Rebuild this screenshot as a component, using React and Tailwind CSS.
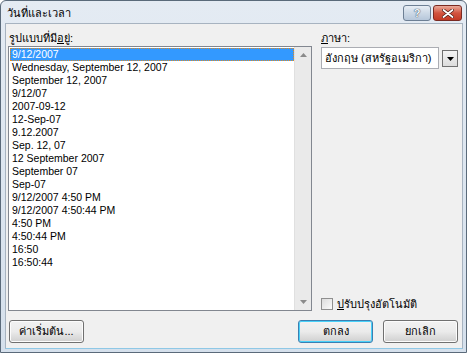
import React from "react";

const items = [
  "9/12/2007",
  "Wednesday, September 12, 2007",
  "September 12, 2007",
  "9/12/07",
  "2007-09-12",
  "12-Sep-07",
  "9.12.2007",
  "Sep. 12, 07",
  "12 September 2007",
  "September 07",
  "Sep-07",
  "9/12/2007 4:50 PM",
  "9/12/2007 4:50:44 PM",
  "4:50 PM",
  "4:50:44 PM",
  "16:50",
  "16:50:44",
];

const font = { fontFamily: '"Liberation Sans", "DejaVu Sans", "Noto Sans", sans-serif' };

function Btn({ children, focused, className = "" }) {
  return (
    <div
      className={
        "h-[23px] w-[75px] rounded-[3px] border flex items-center justify-center text-[11px] text-black bg-gradient-to-b from-[#f2f2f2] via-[#ebebeb] to-[#cfcfcf] " +
        (focused ? "border-[#3c7fb1] shadow-[inset_0_0_0_1px_#48d1f9]" : "border-[#707070] shadow-[inset_0_0_0_1px_#fcfcfc]") +
        " " +
        className
      }
    >
      {children}
    </div>
  );
}

export default function App() {
  return (
    <div className="w-[467px] h-[353px] bg-white" style={font}>
      <div className="w-[467px] h-[353px] border border-[#5a6a7a] rounded-t-[6px] bg-gradient-to-b from-[#e4ebf3] to-[#d5e0ec] flex flex-col">
        {/* title bar */}
        <div className="h-[21px] flex items-center pl-[6px] pr-[4px]">
          <div className="text-[11px] text-black flex-1 pt-[3px]">วันที่และเวลา</div>
          <div className="flex gap-[2px] pt-[3px]">
            <div className="w-[28px] h-[16px] rounded-[3px] border border-[#6d7f94] bg-gradient-to-b from-[#e8eef5] via-[#cdd9e6] to-[#b6c7da] flex items-center justify-center text-[11px] font-bold text-[#f4f7fb] [text-shadow:0_0_1px_#34495e,0_0_1px_#34495e]">
              ?
            </div>
            <div className="w-[29px] h-[16px] rounded-[3px] border border-[#7a2a22] bg-gradient-to-b from-[#e9a99b] via-[#d2543f] to-[#c33a25] flex items-center justify-center">
              <svg width="12" height="9" viewBox="0 0 12 9">
                <path d="M1.5 1 L10.5 8 M10.5 1 L1.5 8" stroke="#4a1a14" strokeWidth="3.2" strokeLinecap="round" />
                <path d="M1.5 1 L10.5 8 M10.5 1 L1.5 8" stroke="#ffffff" strokeWidth="1.8" strokeLinecap="round" />
              </svg>
            </div>
          </div>
        </div>
        {/* content */}
        <div className="flex-1 ml-[4px] mr-[3px] mb-[3px] mt-[1px] border border-[#a7b3c0] bg-[#f0f0f0] flex flex-col pl-[2px] pr-[3px] pt-[8px] border-b-[#8fc8e6]">
          <div className="flex h-[279px]">
            {/* left column */}
            <div className="w-[304px] flex flex-col">
              <div className="h-[14px] text-[11px] leading-[12px] text-black pl-[1px]">
                รูปแบบที่มี<span className="underline">อ</span>ยู่:
              </div>
              <div className="h-[265px] border border-[#828790] bg-white flex">
                <div className="flex-1 pt-[1px] pl-[1px]">
                  {items.map((t, i) =>
                    i === 0 ? (
                      <div
                        key={i}
                        className="h-[13px] leading-[11px] text-[10.5px] text-white bg-[#3399ff] border border-dotted border-[#e08a20] pl-[1px]"
                      >
                        {t}
                      </div>
                    ) : (
                      <div key={i} className="h-[13px] leading-[13px] text-[10.5px] text-black pl-[2px]">
                        {t}
                      </div>
                    )
                  )}
                </div>
                <div className="w-[17px] bg-[#eaeaea] border-l border-[#e0e0e0] flex flex-col justify-between items-center py-[6px]">
                  <svg width="7" height="4" viewBox="0 0 7 4">
                    <path d="M0 4 L3.5 0 L7 4 Z" fill="#8a8a8a" />
                  </svg>
                  <svg width="7" height="4" viewBox="0 0 7 4">
                    <path d="M0 0 L3.5 4 L7 0 Z" fill="#8a8a8a" />
                  </svg>
                </div>
              </div>
            </div>
            {/* right column */}
            <div className="flex-1 flex flex-col pl-[9px]">
              <div className="h-[14px] text-[11px] leading-[12px] text-black">
                <span className="underline">ภ</span>าษา:
              </div>
              <div className="flex items-start gap-[3px]">
                <div className="w-[118px] h-[22px] border border-[#abadb3] bg-white text-[11px] text-black flex items-center pl-[3px] mt-[1px]">
                  อังกฤษ (สหรัฐอเมริกา)
                </div>
                <div className="w-[16px] h-[17px] mt-[4px] border border-[#707070] bg-gradient-to-b from-[#f4f4f4] to-[#dcdcdc] flex items-center justify-center">
                  <svg width="7" height="4" viewBox="0 0 7 4">
                    <path d="M0 0 L3.5 4 L7 0 Z" fill="#000" />
                  </svg>
                </div>
              </div>
              <div className="flex-1" />
              <div className="flex items-center gap-[4px] pb-[1px]">
                <div className="w-[12px] h-[12px] border border-[#8f8f8f] bg-gradient-to-br from-[#dcdcdc] to-[#fbfbfb]" />
                <div className="text-[11px] text-black leading-[12px]">
                  <span className="underline">ป</span>รับปรุงอัตโนมัติ
                </div>
              </div>
            </div>
          </div>
          {/* buttons */}
          <div className="flex items-start pt-[9px]">
            <Btn className="ml-[1px] w-[74px]">ค่าเริ่มต้น...</Btn>
            <div className="flex-1" />
            <Btn focused>ตกลง</Btn>
            <Btn className="ml-[10px] mr-[1px]">ยกเลิก</Btn>
          </div>
        </div>
      </div>
    </div>
  );
}
